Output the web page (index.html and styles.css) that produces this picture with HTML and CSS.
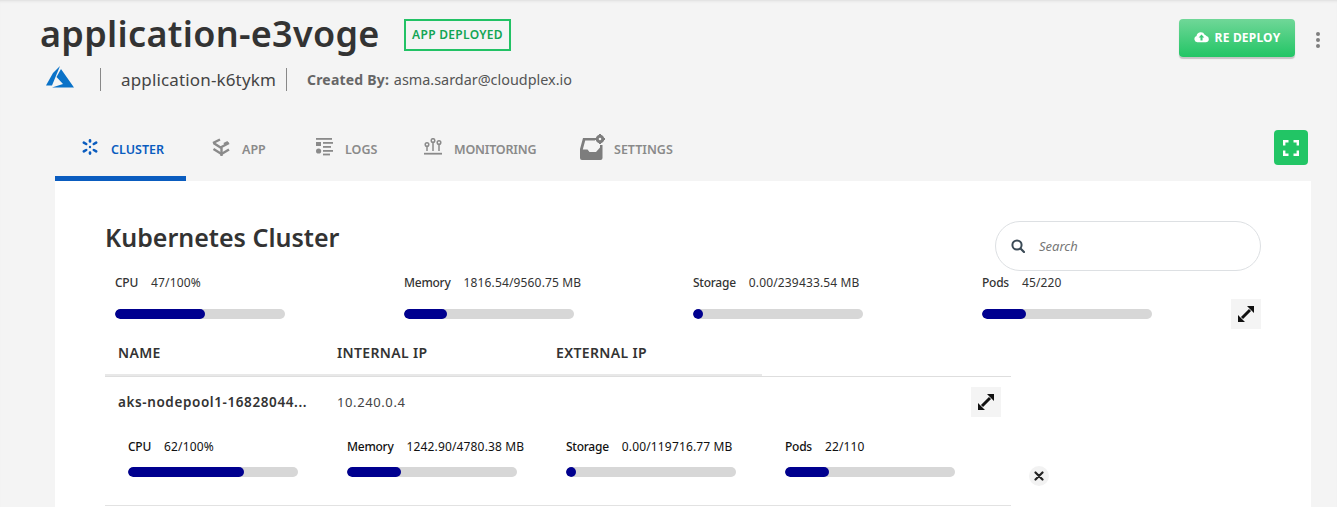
FILE: index.html
```html
<!DOCTYPE html>
<html lang="en">
<head>
<meta charset="utf-8">
<title>application-e3voge</title>
<link rel="stylesheet" href="styles.css">
</head>
<body>
<header class="header">
  <div class="title-row">
    <div class="title-left">
      <h1 class="title">application-e3voge</h1>
      <span class="badge">APP DEPLOYED</span>
    </div>
    <div class="title-right">
      <button class="deploy">
        <svg class="deploy-icon" viewBox="0 0 16 12"><path fill="#fff" d="M3.6 11.5A3.4 3.4 0 0 1 2.7 4.9 4.6 4.6 0 0 1 11.4 3.6 3.2 3.2 0 0 1 13.3 5 3.3 3.3 0 0 1 12.6 11.5Z"/><path fill="#3ccb78" d="M8 3.2 11 6.6H9.1V9.6H6.9V6.6H5Z"/></svg>
        RE DEPLOY
      </button>
      <div class="kebab"><i></i><i></i><i></i></div>
    </div>
  </div>
  <div class="sub-row">
    <svg class="azure" viewBox="0 0 28 22"><path fill="#0a72c8" d="M14 0 7 7 0 19.5H6Z"/><path fill="#0a72c8" d="M15 3 10.5 11 17 18 6 21.5 H28Z"/></svg>
    <span class="sub-name">application-k6tykm</span>
    <span class="sub-created"><b>Created By:</b> asma.sardar@cloudplex.io</span>
  </div>
</header>

<nav class="tabs">
  <div class="tab-list">
    <a class="tab tab-active tab-cluster">
      <svg class="tab-icon ic-cluster" viewBox="0 0 16 16"><g stroke="#0a5cbf" stroke-width="2.6" stroke-linecap="round"><path d="M8 1.4V2.4"/><path d="M8 13.6V14.6"/><path d="M1.8 3.6 4.2 5"/><path d="M14.2 3.6 11.8 5"/><path d="M1.8 12.4 4.2 11"/><path d="M14.2 12.4 11.8 11"/></g><circle cx="8" cy="8" r="1.2" fill="#0a5cbf"/></svg>
      CLUSTER
    </a>
    <a class="tab tab-app">
      <svg class="tab-icon ic-app" viewBox="0 0 19 19"><g fill="none" stroke="#8a8a8a" stroke-width="2.4" stroke-linejoin="round"><path d="M1 5 8 1.5"/><path d="M1.5 5 8.5 9.5 17 5"/><path d="M1.5 11 9.5 16 17 11.5"/><path d="M9.5 9.5V18"/><path d="M12 6 16 4"/></g></svg>
      APP
    </a>
    <a class="tab tab-logs">
      <svg class="tab-icon ic-logs" viewBox="0 0 17 18"><g fill="#8a8a8a"><rect x="0" y="0" width="16" height="1.8"/><rect x="0" y="4" width="5" height="4"/><circle cx="2.6" cy="13" r="2.6"/><rect x="7" y="4" width="10" height="1.8"/><rect x="7" y="8" width="8" height="1.8"/><rect x="7" y="12" width="10" height="1.8"/><rect x="7" y="15.6" width="7" height="1.8"/></g></svg>
      LOGS
    </a>
    <a class="tab tab-mon">
      <svg class="tab-icon ic-mon" viewBox="0 0 18 17"><g fill="none" stroke="#8a8a8a" stroke-width="1.5"><circle cx="3" cy="6.5" r="1.8"/><circle cx="9" cy="2.5" r="1.8"/><circle cx="15" cy="4.5" r="1.8"/><path d="M3 8.5V13"/><path d="M9 4.5V13"/><path d="M15 6.5V13"/><path d="M0 15.7H18" stroke-width="1.8"/></g></svg>
      MONITORING
    </a>
    <a class="tab tab-set">
      <svg class="tab-icon ic-set" viewBox="0 0 25 26"><path fill="#7d7d7d" d="M3 4H15V6.5H5.2L2.8 15.5H7.5L9.5 18H16L20 13.5V11H22.5V24A2 2 0 0 1 20.5 26H2A2 2 0 0 1 0 24V15Z"/><circle cx="20" cy="5" r="2.8" fill="none" stroke="#7d7d7d" stroke-width="3"/><g stroke="#7d7d7d" stroke-width="2"><path d="M20 0V2"/><path d="M20 8V10"/><path d="M15 5H17"/><path d="M23 5H25"/></g></svg>
      SETTINGS
    </a>
  </div>
  <button class="fullscreen">
    <svg viewBox="0 0 16 16" class="fullscreen-icon"><path fill="none" stroke="#fff" stroke-width="2.4" d="M1.2 5.5V1.2H5.5M10.5 1.2H14.8V5.5M14.8 10.5V14.8H10.5M5.5 14.8H1.2V10.5"/></svg>
  </button>
</nav>

<main class="card">
  <div class="card-head">
    <h2 class="card-title">Kubernetes Cluster</h2>
    <label class="search">
      <svg class="search-icon" viewBox="0 0 14 14"><circle cx="6" cy="6" r="4.6" fill="none" stroke="#3b4a56" stroke-width="2"/><path d="M9.5 9.5 13 13" stroke="#3b4a56" stroke-width="2.2" stroke-linecap="round"/></svg>
      <span class="search-text">Search</span>
    </label>
  </div>

  <section class="metrics">
    <div class="metric"><div class="metric-text"><span class="metric-label">CPU</span><span class="metric-value">47/100%</span></div><div class="bar"><div class="bar-fill" style="width:53%"></div></div></div>
    <div class="metric"><div class="metric-text"><span class="metric-label">Memory</span><span class="metric-value">1816.54/9560.75 MB</span></div><div class="bar"><div class="bar-fill" style="width:25%"></div></div></div>
    <div class="metric"><div class="metric-text"><span class="metric-label">Storage</span><span class="metric-value">0.00/239433.54 MB</span></div><div class="bar"><div class="bar-fill" style="width:6%"></div></div></div>
    <div class="metric metric-last">
      <div class="metric-body"><div class="metric-text"><span class="metric-label">Pods</span><span class="metric-value">45/220</span></div><div class="bar"><div class="bar-fill" style="width:26%"></div></div></div>
      <button class="expand"><svg viewBox="0 0 16 16" class="expand-icon"><path stroke="#111" stroke-width="3" d="M4 12 12 4"/><path fill="#111" d="M9 0H16V7ZM0 9V16H7Z"/></svg></button>
    </div>
  </section>

  <section class="table">
    <div class="table-head">
      <span class="th">NAME</span>
      <span class="th">INTERNAL IP</span>
      <span class="th">EXTERNAL IP</span>
    </div>
    <div class="node">
      <div class="node-row">
        <span class="node-name">aks-nodepool1-16828044...</span>
        <span class="node-ip">10.240.0.4</span>
        <button class="expand expand-node"><svg viewBox="0 0 16 16" class="expand-icon"><path stroke="#111" stroke-width="3" d="M4 12 12 4"/><path fill="#111" d="M9 0H16V7ZM0 9V16H7Z"/></svg></button>
      </div>
      <div class="node-metrics">
        <div class="metric-node"><div class="metric-text text-dark"><span class="metric-label">CPU</span><span class="metric-value">62/100%</span></div><div class="bar bar-node"><div class="bar-fill" style="width:68%"></div></div></div>
        <div class="metric-node"><div class="metric-text text-dark"><span class="metric-label">Memory</span><span class="metric-value">1242.90/4780.38 MB</span></div><div class="bar bar-node"><div class="bar-fill" style="width:32%"></div></div></div>
        <div class="metric-node"><div class="metric-text text-dark"><span class="metric-label">Storage</span><span class="metric-value">0.00/119716.77 MB</span></div><div class="bar bar-node"><div class="bar-fill" style="width:6%"></div></div></div>
        <div class="metric-node"><div class="metric-text text-dark"><span class="metric-label">Pods</span><span class="metric-value">22/110</span></div><div class="bar bar-node"><div class="bar-fill" style="width:26%"></div></div></div>
        <button class="close"><svg viewBox="0 0 10 10" class="close-icon"><path d="M1.5 1.5 8.5 8.5M8.5 1.5 1.5 8.5" stroke="#222" stroke-width="2.2" stroke-linecap="round"/></svg></button>
      </div>
    </div>
  </section>
</main>
</body>
</html>
```

FILE: styles.css
```css
* { box-sizing: border-box; }
html, body { margin: 0; padding: 0; }
body {
  width: 1337px;
  height: 507px;
  overflow: hidden;
  background: #f4f4f4;
  box-shadow: inset 0 3px 3px -2px #dcdcdc;
  font-family: "Noto Sans", "Open Sans", sans-serif;
  color: #333;
}
button { border: 0; padding: 0; font-family: inherit; }

.header { padding: 19px 17px 0 40px; }
.title-row { display: flex; justify-content: space-between; height: 47px; }
.title-left { display: flex; align-items: flex-start; }
.title {
  margin: 0;
  font-size: 36px;
  line-height: 29px;
  font-weight: 600;
  color: #333;
  width: 364px;
  letter-spacing: 0.3px;
}
.badge {
  height: 32px;
  width: 107px;
  border: 2px solid #22c265;
  color: #12a555;
  font-size: 12px;
  font-weight: 600;
  line-height: 27px;
  text-align: center;
  white-space: nowrap;
  letter-spacing: 0.3px;
}
.title-right { display: flex; align-items: flex-start; }
.deploy {
  width: 116px;
  height: 38px;
  padding-bottom: 2px;
  border-radius: 4px;
  background: linear-gradient(#70d798, #22c565);
  box-shadow: 0 2px 1px #c4c4c4;
  color: #fff;
  font-size: 12px;
  font-weight: 700;
  letter-spacing: 0.2px;
  display: flex;
  align-items: center;
  justify-content: center;
  gap: 6px;
}
.deploy-icon { width: 15px; height: 12px; }
.kebab {
  display: flex;
  flex-direction: column;
  gap: 2px;
  margin: 13px 0 0 21px;
  width: 4px;
}
.kebab i { display: block; width: 4px; height: 4px; border-radius: 50%; background: #7e7e7e; }

.sub-row { display: flex; align-items: center; height: 26px; }
.azure { width: 28px; height: 22px; margin: 0 0 0 6px; align-self: flex-start; }
.sub-name {
  margin-left: 26px;
  border-left: 1px solid #888;
  padding-left: 20px;
  font-size: 17px;
  letter-spacing: 0.15px;
  line-height: 23px;
  color: #444;
  width: 187px;
  white-space: nowrap;
  border-right: 1px solid #888;
}
.sub-created { margin-left: 20px; font-size: 14.4px; color: #555; white-space: nowrap; }
.sub-created b { font-weight: 700; color: #666; font-size: 14px; letter-spacing: 0.2px; margin-right: 1px; }

.tabs {
  display: flex;
  justify-content: space-between;
  margin: 28px 29px 0 55px;
  height: 61px;
}
.tab-list { display: flex; }
.tab {
  display: flex;
  align-items: center;
  height: 61px;
  padding-top: 2px;
  font-size: 12.5px;
  font-weight: 600;
  color: #8a8a8a;
  white-space: nowrap;
  border-bottom: 5px solid transparent;
}
.tab-active { color: #0a5cbf; border-bottom-color: #0a5cbf; }
.tab-cluster { width: 131px; padding-left: 27px; }
.tab-app { width: 104px; padding-left: 26px; }
.tab-logs { width: 108px; padding-left: 26px; }
.tab-mon { width: 182px; padding-left: 26px; letter-spacing: -0.2px; }
.tab-set { padding-left: 0; }
.tab-icon { display: block; flex: none; }
.ic-cluster { width: 16px; height: 16px; margin-right: 13px; margin-bottom: 5px; }
.ic-app { width: 19px; height: 19px; margin-right: 11px; margin-bottom: 4px; }
.ic-logs { width: 17px; height: 18px; margin-right: 12px; margin-bottom: 4px; }
.ic-mon { width: 18px; height: 17px; margin-right: 12px; margin-bottom: 6px; }
.ic-set { width: 25px; height: 26px; margin-right: 9px; margin-bottom: 5px; }
.fullscreen {
  width: 34px;
  height: 35px;
  margin-top: 10px;
  border-radius: 4px;
  background: #22c565;
  display: flex;
  align-items: center;
  justify-content: center;
}
.fullscreen-icon { width: 16px; height: 16px; }

.card {
  margin: 0 26px 0 55px;
  background: #fff;
  padding: 40px 50px 0;
  height: 326px;
}
.card-head { display: flex; justify-content: space-between; height: 50px; }
.card-title {
  margin: 0;
  font-size: 25px;
  font-weight: 600;
  line-height: 32px;
  color: #333;
}
.search {
  width: 266px;
  height: 50px;
  border: 1px solid #dde0e3;
  border-radius: 25px;
  display: flex;
  align-items: center;
  padding-left: 15px;
}
.search-icon { width: 14px; height: 14px; }
.search-text { margin-left: 14px; font-size: 13px; font-style: italic; color: #777; }

.metrics {
  display: grid;
  grid-template-columns: repeat(4, 289px);
}
.metric { padding: 0 0 10px 10px; }
.metric-last { display: flex; justify-content: space-between; align-items: flex-end; padding-bottom: 0; }
.metric-body { padding-bottom: 10px; }
.metric-node { width: 170px; }
.metric-text {
  display: flex;
  gap: 13px;
  font-size: 12px;
  line-height: 24px;
  height: 24px;
  color: #333;
  white-space: nowrap;
}
.text-dark { color: #111; }
.metric-label { font-weight: 500; letter-spacing: -0.25px; }
.metric-value { letter-spacing: 0.15px; }
.bar {
  width: 170px;
  height: 10px;
  margin-top: 14px;
  border-radius: 5px;
  background: #d7d7d7;
  overflow: hidden;
}
.bar-node { margin-top: 8px; }
.bar-fill { height: 100%; border-radius: 5px; background: #00008f; }
.expand {
  width: 30px;
  height: 30px;
  background: #f4f4f4;
  display: flex;
  align-items: center;
  justify-content: center;
}
.expand-icon { width: 16px; height: 16px; }

.table { width: 906px; }
.table-head {
  display: grid;
  grid-template-columns: repeat(3, 219px);
  padding: 2px 0 0 13px;
  width: 657px;
  height: 47px;
  border-bottom: 2px solid #e8e8e8;
  align-items: center;
  font-size: 14px;
  letter-spacing: 0.35px;
  font-weight: 600;
  color: #333;
}
.node { border-top: 1px solid #dedede; border-bottom: 1px solid #e2e2e2; height: 130px; }
.node-row {
  display: flex;
  align-items: center;
  height: 50px;
  margin-bottom: 8px;
  padding-left: 13px;
  padding-right: 10px;
}
.node-name { width: 219px; font-size: 13.5px; letter-spacing: 0.6px; font-weight: 600; color: #333; white-space: nowrap; }
.node-ip { font-size: 13px; letter-spacing: 0.6px; color: #444; }
.expand-node { margin-left: auto; }
.node-metrics {
  display: grid;
  grid-template-columns: repeat(4, 219px) 20px;
  padding-left: 23px;
}
.close {
  width: 20px;
  height: 20px;
  margin: 31px 0 0 25px;
  border-radius: 50%;
  background: #f2f2f2;
  display: flex;
  align-items: center;
  justify-content: center;
}
.close-icon { width: 10px; height: 10px; }
```
